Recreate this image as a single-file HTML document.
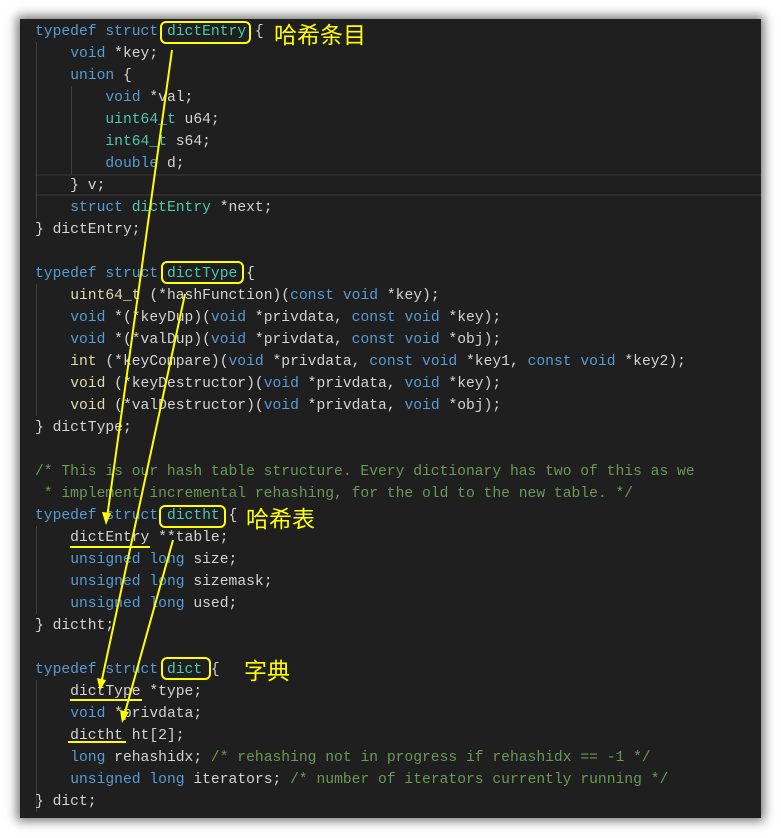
<!DOCTYPE html>
<html><head><meta charset="utf-8"><style>
body{margin:0;width:781px;height:838px;background:#fff;position:relative;overflow:hidden}
#p{position:absolute;left:20px;top:19px;width:741px;height:799px;background:#1f1f1f;box-shadow:0 0 10px 3px rgba(0,0,0,.55)}
pre{position:absolute;left:15px;top:2px;margin:0;font-family:"Liberation Mono",monospace;font-size:14.67px;line-height:22px;color:#d4d4d4}
.k{color:#569cd6}.t{color:#4ec9b0}.c{color:#6a9955}.f{color:#dcdcaa}
.g{position:absolute;width:1px;background:#404040}
.hl{position:absolute;left:15px;right:0;top:155px;height:18px;border-top:2px solid #2c2c2c;border-bottom:2px solid #2c2c2c}
.b{position:absolute;border:2px solid #ff0;border-radius:6px}
.z{position:absolute;color:#ff0;font-family:"Noto Sans CJK SC",sans-serif;font-size:23px;line-height:24px}
svg{position:absolute;left:0;top:0}
</style></head><body>
<div id="p">
<div class="hl"></div>
<div class="g" style="left:16px;top:23px;height:176px"></div>
<div class="g" style="left:51px;top:67px;height:88px"></div>
<div class="g" style="left:16px;top:265px;height:132px"></div>
<div class="g" style="left:16px;top:507px;height:88px"></div>
<div class="g" style="left:16px;top:661px;height:132px"></div>
<pre><span class="k">typedef</span> <span class="k">struct</span> <span class="t">dictEntry</span> {
    <span class="k">void</span> *key;
    <span class="k">union</span> {
        <span class="k">void</span> *val;
        <span class="t">uint64_t</span> u64;
        <span class="t">int64_t</span> s64;
        <span class="k">double</span> d;
    } v;
    <span class="k">struct</span> <span class="t">dictEntry</span> *next;
} dictEntry;

<span class="k">typedef</span> <span class="k">struct</span> <span class="t">dictType</span> {
    <span class="f">uint64_t</span> (*hashFunction)(<span class="k">const</span> <span class="k">void</span> *key);
    <span class="k">void</span> *(*keyDup)(<span class="k">void</span> *privdata, <span class="k">const</span> <span class="k">void</span> *key);
    <span class="k">void</span> *(*valDup)(<span class="k">void</span> *privdata, <span class="k">const</span> <span class="k">void</span> *obj);
    <span class="f">int</span> (*keyCompare)(<span class="k">void</span> *privdata, <span class="k">const</span> <span class="k">void</span> *key1, <span class="k">const</span> <span class="k">void</span> *key2);
    <span class="f">void</span> (*keyDestructor)(<span class="k">void</span> *privdata, <span class="k">void</span> *key);
    <span class="f">void</span> (*valDestructor)(<span class="k">void</span> *privdata, <span class="k">void</span> *obj);
} dictType;

<span class="c">/* This is our hash table structure. Every dictionary has two of this as we
 * implement incremental rehashing, for the old to the new table. */</span>
<span class="k">typedef</span> <span class="k">struct</span> <span class="t">dictht</span> {
    dictEntry **table;
    <span class="k">unsigned</span> <span class="k">long</span> size;
    <span class="k">unsigned</span> <span class="k">long</span> sizemask;
    <span class="k">unsigned</span> <span class="k">long</span> used;
} dictht;

<span class="k">typedef</span> <span class="k">struct</span> <span class="t">dict</span> {
    dictType *type;
    <span class="k">void</span> *privdata;
    dictht ht[2];
    <span class="k">long</span> rehashidx; <span class="c">/* rehashing not in progress if rehashidx == -1 */</span>
    <span class="k">unsigned</span> <span class="k">long</span> iterators; <span class="c">/* number of iterators currently running */</span>
} dict;</pre>
</div>
<div class="b" style="left:160px;top:21px;width:87px;height:19px"></div>
<div class="b" style="left:161px;top:261px;width:79px;height:19px"></div>
<div class="b" style="left:159px;top:505px;width:63px;height:19px"></div>
<div class="b" style="left:161px;top:657px;width:46px;height:19px"></div>
<div class="z" style="left:274px;top:21px">哈希条目</div>
<div class="z" style="left:246px;top:505px">哈希表</div>
<div class="z" style="left:244px;top:657px">字典</div>
<svg width="781" height="838">
<g stroke="#ff0" stroke-width="2" fill="none">
<line x1="172" y1="50" x2="107" y2="518"/>
<line x1="185" y1="294" x2="101" y2="684"/>
<line x1="173" y1="540" x2="124" y2="716"/>
<line x1="70" y1="547" x2="150" y2="547"/>
<line x1="70" y1="700" x2="142" y2="700"/>
<line x1="68" y1="742" x2="126" y2="742"/>
</g>
<g fill="#ff0">
<polygon points="106,525 102,512 111,513"/>
<polygon points="100,691 97,678 106,680"/>
<polygon points="122,723 120,710 129,712"/>
</g>
</svg>
</body></html>
